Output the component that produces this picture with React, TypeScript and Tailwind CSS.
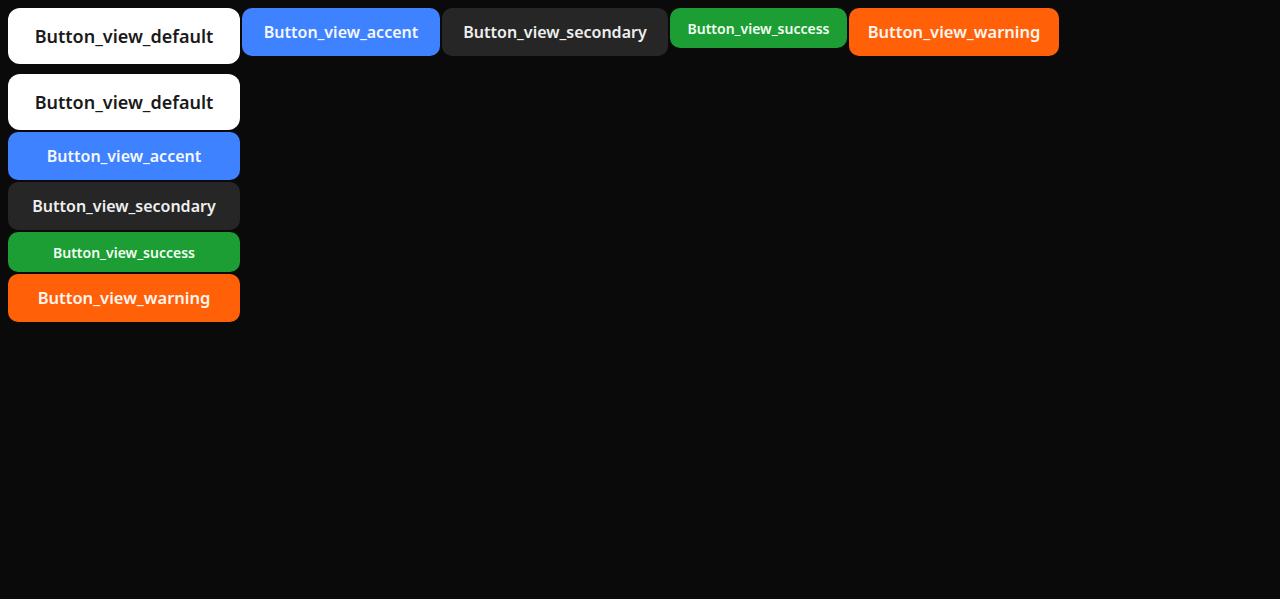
const views = [
  { name: "default", w: "w-[232px]", cls: "bg-white text-[#1a1a1a] h-14 text-[18px] rounded-xl" },
  { name: "accent", w: "w-[198px]", cls: "bg-[#3f82ff] text-[#f5f7ff] h-12 text-[16px] rounded-[10px]" },
  { name: "secondary", w: "w-[226px]", cls: "bg-[#262626] text-[#efefef] h-12 text-[16px] rounded-[10px]" },
  { name: "success", w: "w-[177px]", cls: "bg-[#1c9e35] text-[#f2fff4] h-10 text-[14px] rounded-[10px]" },
  { name: "warning", w: "w-[210px]", cls: "bg-[#ff6008] text-[#fff6f0] h-12 text-[16.5px] rounded-[10px]" },
];

export default function App() {
  return (
    <div className="min-h-screen bg-[#0a0a0a] p-2 font-['Noto_Sans',sans-serif] font-semibold">
      <div className="flex items-start gap-[2px]">
        {views.map((v) => (
          <button key={v.name} className={`flex items-center justify-center whitespace-nowrap ${v.w} ${v.cls}`}>
            Button_view_{v.name}
          </button>
        ))}
      </div>

      <div className="mt-[10px] flex w-[232px] flex-col gap-[2px]">
        {views.map((v) => (
          <button key={v.name} className={`flex w-full items-center justify-center whitespace-nowrap ${v.cls}`}>
            Button_view_{v.name}
          </button>
        ))}
      </div>
    </div>
  );
}
